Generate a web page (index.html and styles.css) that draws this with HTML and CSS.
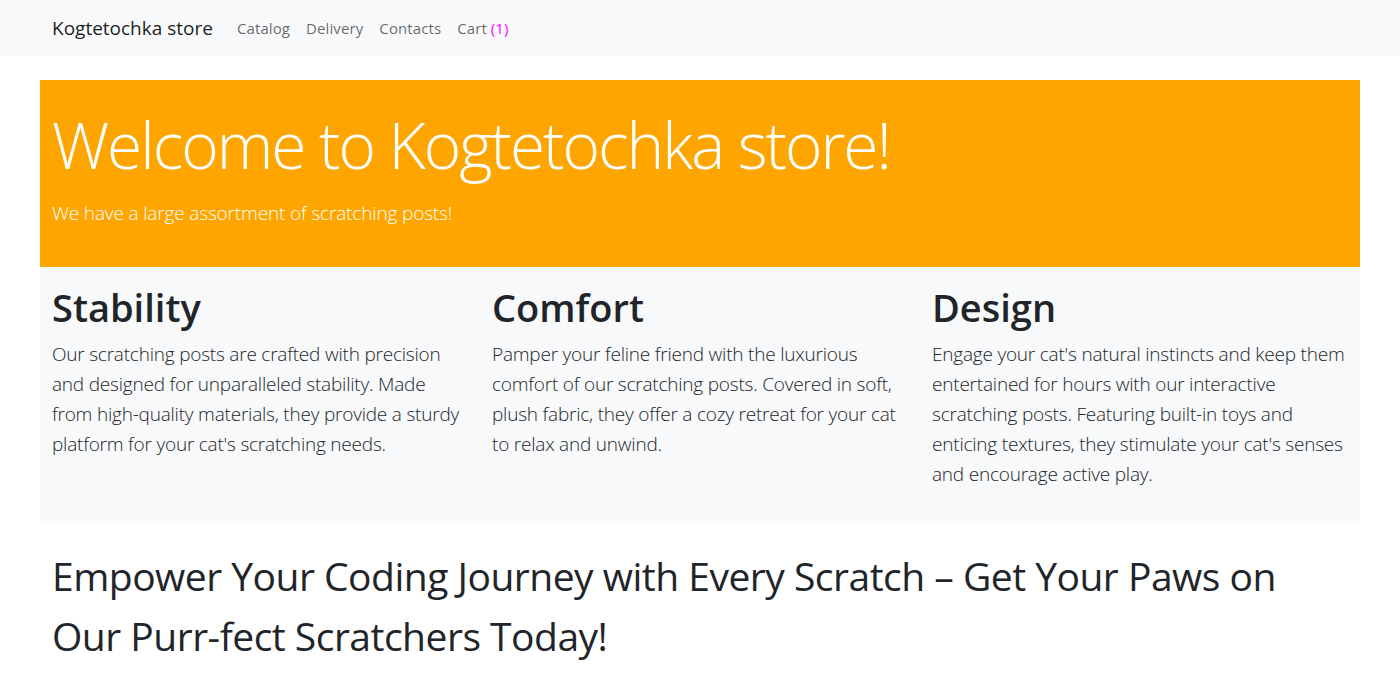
FILE: index.html
```html
<!DOCTYPE html>
<html lang="en">
<head>
<meta charset="utf-8">
<title>Kogtetochka store</title>
<link rel="stylesheet" href="styles.css">
</head>
<body>
<nav class="navbar">
  <div class="nav-inner">
    <a class="brand" href="#">Kogtetochka store</a>
    <ul class="nav-links">
      <li><a href="#">Catalog</a></li>
      <li><a href="#">Delivery</a></li>
      <li><a href="#">Contacts</a></li>
      <li><a href="#">Cart <span class="cart-count">(1)</span></a></li>
    </ul>
  </div>
</nav>
<main class="container">
  <section class="hero">
    <h1 class="hero-title">Welcome to Kogtetochka store!</h1>
    <p class="hero-lead">We have a large assortment of scratching posts!</p>
  </section>
  <section class="features">
    <div class="feature">
      <h2>Stability</h2>
      <p>Our scratching posts are crafted with precision and designed for unparalleled stability. Made from high-quality materials, they provide a sturdy platform for your cat's scratching needs.</p>
    </div>
    <div class="feature">
      <h2>Comfort</h2>
      <p>Pamper your feline friend with the luxurious comfort of our scratching posts. Covered in soft, plush fabric, they offer a cozy retreat for your cat to relax and unwind.</p>
    </div>
    <div class="feature">
      <h2>Design</h2>
      <p>Engage your cat's natural instincts and keep them entertained for hours with our interactive scratching posts. Featuring built-in toys and enticing textures, they stimulate your cat's senses and encourage active play.</p>
    </div>
  </section>
  <section class="slogan">
    <h2>Empower Your Coding Journey with Every Scratch – Get Your Paws on Our Purr-fect Scratchers Today!</h2>
  </section>
</main>
</body>
</html>
```
FILE: styles.css
```css
* { box-sizing: border-box; }
html, body { margin: 0; padding: 0; }
body {
  font-family: "Segoe UI", "Open Sans", "Noto Sans", sans-serif;
  font-size: 16px;
  line-height: 1.5;
  color: #212529;
  background: #fff;
}
a { text-decoration: none; }

.navbar {
  background: #f8f9fa;
  height: 56px;
}
.nav-inner {
  max-width: 1320px;
  margin: 0 auto;
  padding: 0 12px;
  height: 56px;
  display: flex;
  align-items: center;
}
.brand {
  font-size: 19px;
  color: rgba(0,0,0,.9);
  margin-right: 16px;
}
.nav-links {
  list-style: none;
  margin: 0;
  padding: 0;
  display: flex;
}
.nav-links a {
  display: block;
  padding: 8px;
  font-size: 15px;
  letter-spacing: 0.1px;
  color: rgba(0,0,0,.6);
}
.cart-count { color: #f0f; }

.container {
  max-width: 1320px;
  margin: 24px auto 0;
}
.hero {
  background: #ffa500;
  color: #fff;
  padding: 27px 12px 39px;
}
.hero-title {
  margin: 0 0 14px;
  font-size: 64px;
  font-weight: 300;
  letter-spacing: -2px;
  line-height: 1.2;
}
.hero-lead {
  margin: 0;
  font-size: 19px;
  font-weight: 300;
  letter-spacing: -0.15px;
  line-height: 30px;
}
.features {
  background: #f8f9fa;
  display: grid;
  grid-template-columns: repeat(3, 1fr);
  padding-bottom: 32px;
}
.feature { padding: 18px 12px 0; }
.feature h2 {
  margin: 0 0 9px;
  font-size: 38px;
  font-weight: 600;
  line-height: 1.2;
}
.feature p {
  margin: 0;
  font-size: 19px;
  font-weight: 300;
  letter-spacing: -0.21px;
  line-height: 30px;
}
.slogan { padding: 25px 12px 0; }
.slogan h2 {
  max-width: 1240px;
  margin: 0;
  font-size: 39px;
  font-weight: 400;
  letter-spacing: -0.5px;
  line-height: 60px;
}
```
